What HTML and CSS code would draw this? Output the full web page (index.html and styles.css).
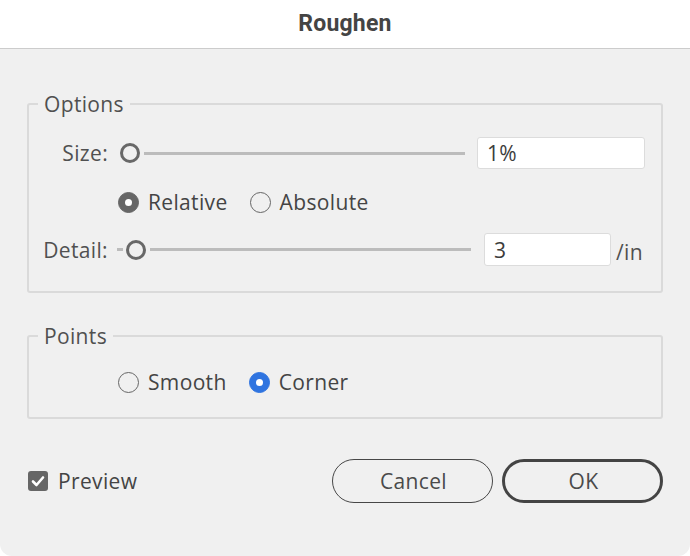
FILE: index.html
```html
<!DOCTYPE html>
<html>
<head>
<meta charset="utf-8">
<link rel="stylesheet" href="styles.css">
</head>
<body>
<div class="dialog">
  <div class="titlebar">Roughen</div>
  <div class="content">
    <fieldset class="group options">
      <legend>Options</legend>
      <div class="row size-row">
        <span class="label">Size:</span>
        <div class="slider size-slider">
          <span class="thumb"></span>
          <span class="track"></span>
        </div>
        <div class="field size-field">1%</div>
      </div>
      <div class="row radio-row">
        <span class="radio checked gray"></span><span class="rlabel">Relative</span>
        <span class="radio"></span><span class="rlabel">Absolute</span>
      </div>
      <div class="row detail-row">
        <span class="label">Detail:</span>
        <div class="slider detail-slider">
          <span class="track lead"></span>
          <span class="thumb"></span>
          <span class="track"></span>
        </div>
        <div class="field detail-field">3</div>
        <span class="unit">/in</span>
      </div>
    </fieldset>
    <fieldset class="group points">
      <legend>Points</legend>
      <div class="row radio-row points-row">
        <span class="radio"></span><span class="rlabel">Smooth</span>
        <span class="radio checked blue"></span><span class="rlabel">Corner</span>
      </div>
    </fieldset>
    <div class="footer">
      <div class="check">
        <span class="box"><svg width="20" height="20" viewBox="0 0 20 20"><path d="M5 10.5 L8.5 14 L15 6.5" fill="none" stroke="#fff" stroke-width="2.6" stroke-linecap="round" stroke-linejoin="round"/></svg></span>
        <span class="clabel">Preview</span>
      </div>
      <div class="buttons">
        <button class="btn">Cancel</button>
        <button class="btn primary">OK</button>
      </div>
    </div>
  </div>
</div>
</body>
</html>
```
FILE: styles.css
```css
* { box-sizing: border-box; }
html, body { margin: 0; padding: 0; background: #ffffff; }
body { font-family: "Open Sans", "Noto Sans", sans-serif; color: #444; }

.dialog { width: 690px; height: 556px; display: flex; flex-direction: column; }

.titlebar {
  height: 49px;
  flex: none;
  background: #ffffff;
  border-bottom: 1px solid #cccccc;
  box-shadow: 0 1px 1px rgba(0,0,0,0.05);
  display: flex; align-items: center; justify-content: center;
  font-family: Roboto, "Open Sans", sans-serif;
  font-weight: 700;
  font-size: 23px;
  letter-spacing: 0.2px;
  color: #444;
  padding-bottom: 2px;
}

.content {
  flex: 1;
  background: #f0f0f0;
  border-radius: 0 0 12px 12px;
  padding: 0 27px;
  font-size: 21px;
  letter-spacing: 0.35px;
}

.group {
  margin: 0;
  padding: 0;
  border: 2px solid #dadada;
  border-radius: 3px;
}
.group legend {
  margin-left: 9px;
  padding: 0 6px;
  line-height: 24px;
  font-size: 21px;
  color: #505050;
}
.options { margin-top: 43px; padding-bottom: 25px; }
.points { margin-top: 31px; padding-bottom: 25px; }

.row { display: flex; align-items: center; }
.label { width: 79px; text-align: right; flex: none; color: #505050; }

.size-row { margin-top: 21px; height: 32px; }
.detail-row { margin-top: 21px; height: 33px; }

.slider { display: flex; align-items: center; flex: none; }
.size-slider { width: 345px; margin-left: 12px; }
.detail-slider { width: 354px; margin-left: 9px; }
.thumb {
  width: 20px; height: 20px; flex: none;
  border: 3.5px solid #686868;
  border-radius: 50%;
}
.track { height: 3px; background: #bcbcbc; flex: 1; margin-left: 4px; }
.track.lead { flex: none; width: 6px; margin-left: 0; margin-right: 3px; }

.field {
  background: #fff;
  border: 1.5px solid #dcdcdc;
  border-radius: 3px;
  height: 100%;
  display: flex; align-items: center;
  padding-left: 9px;
  color: #3c3c3c;
}
.size-field { width: 168px; margin-left: 12px; }
.detail-field { width: 127px; margin-left: 13px; }
.unit { margin-left: 5px; align-self: flex-end; line-height: 28px; color: #505050; }

.radio-row { margin-top: 23px; height: 20px; padding-left: 89px; }
.points-row { margin-top: 24px; }
.radio {
  width: 21px; height: 21px; flex: none;
  border: 1.5px solid #666;
  border-radius: 50%;
  display: flex; align-items: center; justify-content: center;
}
.radio.checked::after {
  content: "";
  width: 7px; height: 7px; border-radius: 50%; background: #fff;
}
.radio.gray { background: #666; border-color: #666; }
.radio.blue { background: #2f74e0; border-color: #2f74e0; }
.rlabel { margin-left: 9px; margin-right: 22px; }

.footer {
  margin-top: 40px;
  height: 44px;
  display: flex; align-items: center; justify-content: space-between;
  padding-left: 1px;
}
.check { display: flex; align-items: center; }
.box {
  width: 20px; height: 20px; border-radius: 3px; background: #666;
  display: flex;
}
.clabel { margin-left: 10px; }
.buttons { display: flex; gap: 9px; }
.btn {
  width: 161px; height: 44px;
  border-radius: 22px;
  border: 1.5px solid #474747;
  background: transparent;
  font-family: "Open Sans", "Noto Sans", sans-serif;
  font-size: 21px;
  letter-spacing: 0.35px;
  color: #4a4a4a;
  padding: 0 0 0 2px;
}
.btn.primary { border: 3px solid #444; }
```
